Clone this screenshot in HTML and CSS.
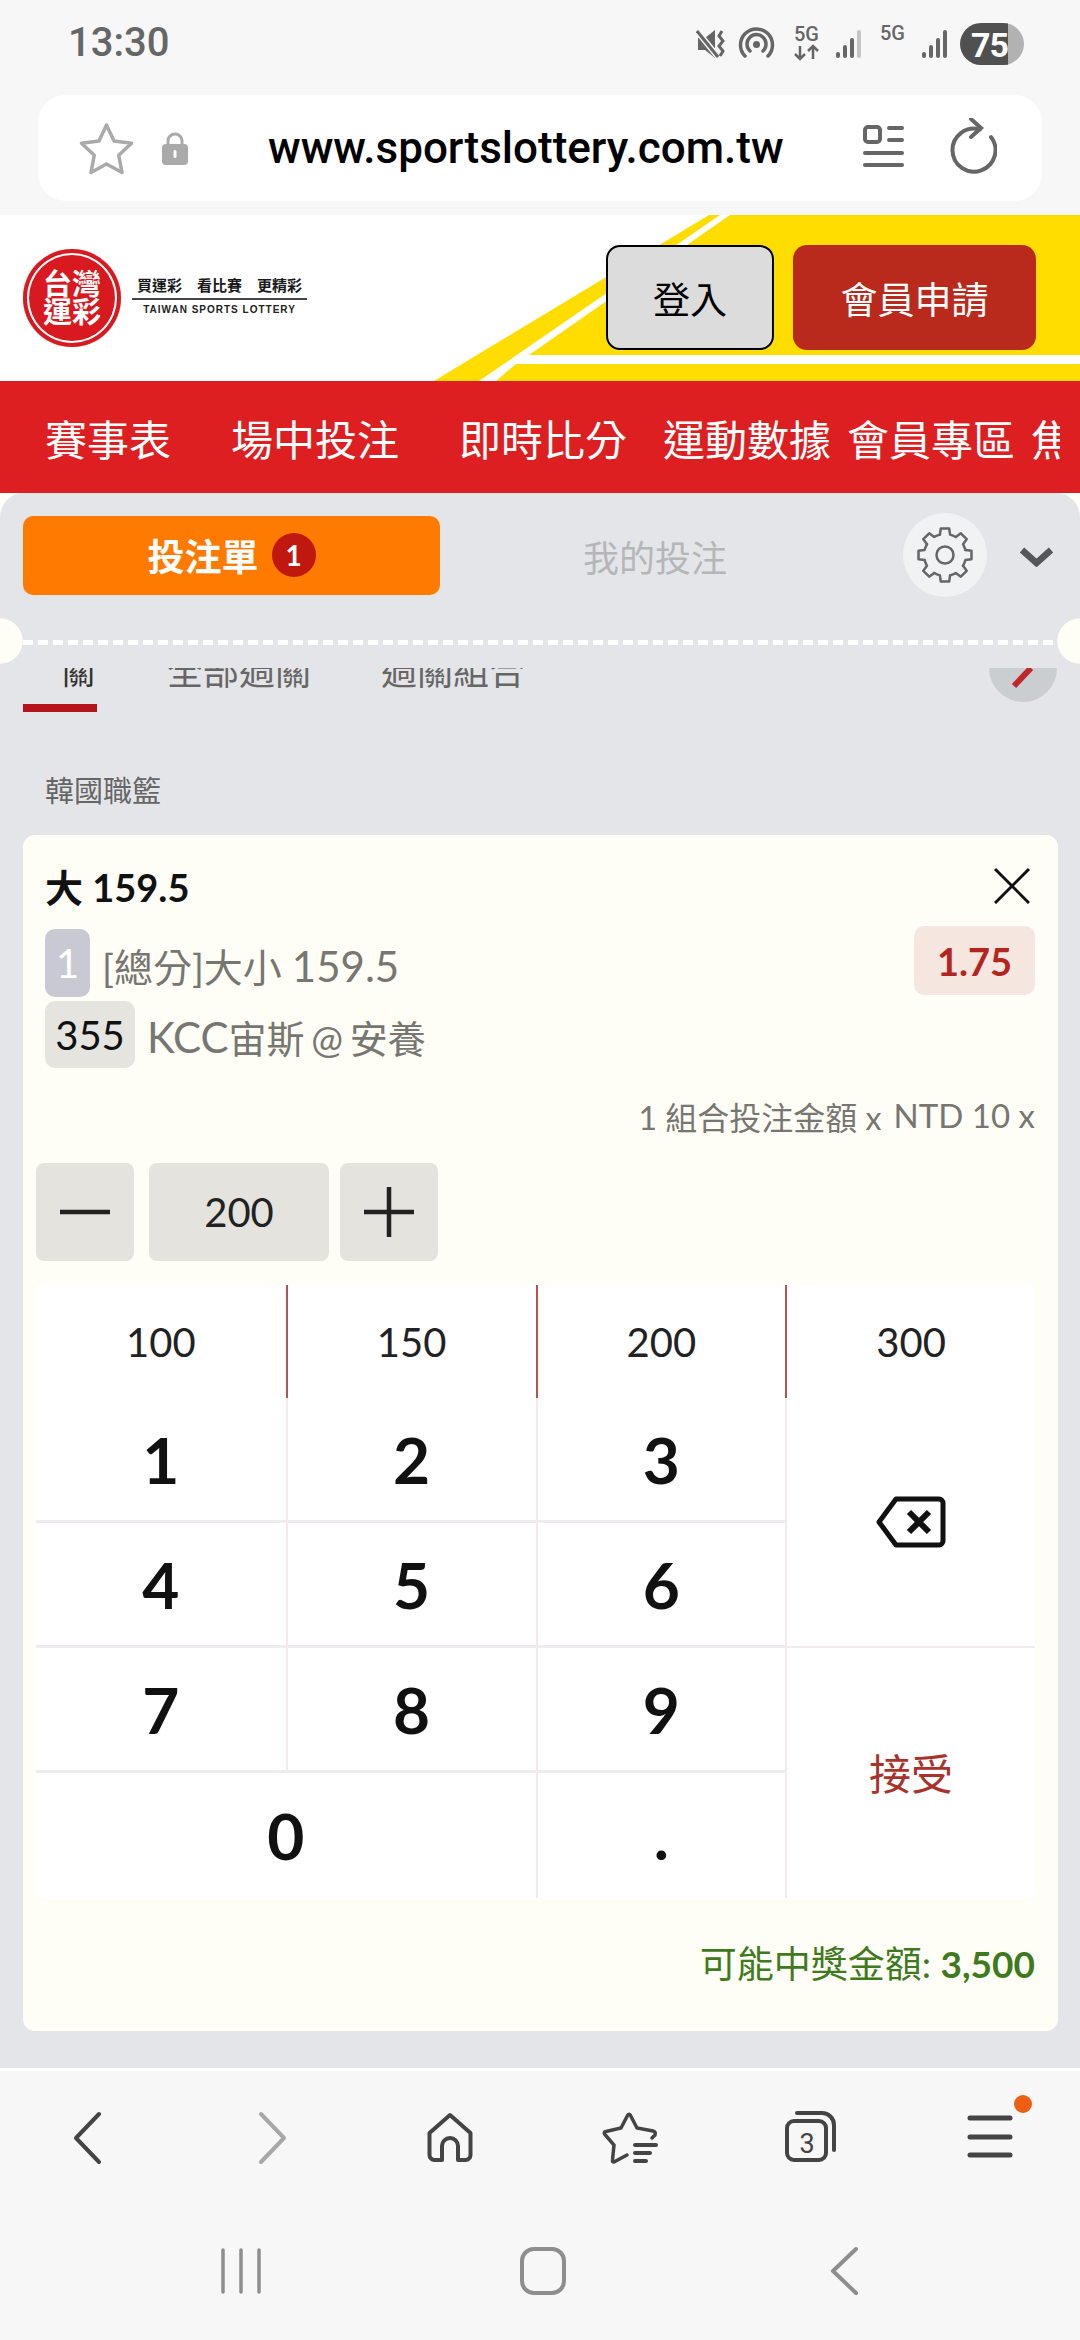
FILE: index.html
```html
<!DOCTYPE html>
<html>
<head>
    <meta charset="utf-8">
    <link rel="stylesheet" href="styles.css">
</head>
<body>
    <div class="chrome-top">
        <div class="status-bar">
            <span class="clock">13:30</span>
            <svg class="status-icons" width="328" height="44" viewBox="0 0 328 44">
                <path d="M2 15h7l10-8v28l-10-8H2z" fill="#666"/>
                <path d="M1 8l21 26" stroke="#f7f7f7" stroke-width="6"/>
                <path d="M1 8l21 26" stroke="#666" stroke-width="3"/>
                <path d="M26 8l-3 5 4 5-4 5 4 5-3 5" fill="none" stroke="#666" stroke-width="3"/>
                <g fill="none" stroke="#666" stroke-width="3.5" stroke-linecap="round">
                    <path d="M49 33a16 16 0 1 1 23 0"/>
                    <path d="M54 28a9.5 9.5 0 1 1 13 0"/>
                </g>
                <circle cx="60.5" cy="21.5" r="3.5" fill="#666"/>
                <text x="98" y="18" class="net-label">5G</text>
                <path d="M104 23v13m-5-5 5 5 5-5M117 36V23m-5 5 5-5 5 5" fill="none" stroke="#666" stroke-width="2.5"/>
                <g fill="#666">
                    <rect x="140" y="29" width="4" height="6" rx="2"/>
                    <rect x="147" y="22" width="4" height="13" rx="2"/>
                    <rect x="154" y="15" width="4" height="20" rx="2"/>
                    <rect x="161" y="7" width="4" height="28" rx="2" fill="#c4c4c4"/>
                    <rect x="226" y="29" width="4" height="6" rx="2"/>
                    <rect x="233" y="22" width="4" height="13" rx="2"/>
                    <rect x="240" y="15" width="4" height="20" rx="2"/>
                    <rect x="247" y="7" width="4" height="28" rx="2"/>
                </g>
                <text x="184" y="17" class="net-label">5G</text>
                <path d="M312 0h-27a21 21 0 0 0 0 42h27z" fill="#505050"/>
                <path d="M312 0h-5a21 21 0 0 1 0 42h5z" fill="#b2b2b2"/>
                <text x="275" y="34" class="batt-label">75</text>
            </svg>
        </div>
        <div class="url-bar">
            <svg class="url-star" width="55" height="53" viewBox="0 0 55 53">
                <path d="M27.5 3l7.5 16 17.5 2.200-12.800 12 3.300 17.300-15.500-8.500-15.500 8.500 3.300-17.300-12.800-12 17.500-2.200z" fill="none" stroke="#aaa" stroke-width="3.5" stroke-linejoin="round"/>
            </svg>
            <svg class="url-lock" width="26" height="34" viewBox="0 0 26 34">
                <path d="M6 15V10a7 7 0 0 1 14 0v5" fill="none" stroke="#aaa" stroke-width="3"/>
                <rect y="13" width="26" height="21" rx="4" fill="#aaa"/>
                <rect x="11.5" y="19" width="3" height="8" rx="1.5" fill="#fff"/>
            </svg>
            <span class="url-text">www.sportslottery.com.tw</span>
            <svg class="url-reader" width="42" height="44" viewBox="0 0 42 44">
                <rect x="2" y="2" width="15" height="15" rx="3" fill="none" stroke="#666" stroke-width="4"/>
                <path d="M26 3h13M26 15h13M2 28h37M2 40h37" stroke="#666" stroke-width="4" stroke-linecap="round"/>
            </svg>
            <svg class="url-reload" width="48" height="60" viewBox="0 0 48 60">
                <path d="M42 19A21.500 21.500 0 1 1 31 11.500" fill="none" stroke="#666" stroke-width="4" stroke-linecap="round"/>
                <path d="M22 1l10 9-10 9" fill="none" stroke="#666" stroke-width="4" stroke-linecap="round"/>
            </svg>
        </div>
    </div>

    <header class="site-header">
        <svg class="header-bg" width="1080" height="166" viewBox="0 0 1080 166">
            <path d="M709 0h11L479 166h-45zM730 0h350v140H529zM496 166l20-17h564v17z" fill="#ffdd00"/>
        </svg>
        <div class="logo">
            <div class="logo-mark">
                <span>台灣運彩</span>
            </div>
            <div class="logo-text">
                <div class="logo-slogan"><span>買運彩</span><span>看比賽</span><span>更精彩</span></div>
                <div class="logo-en">TAIWAN SPORTS LOTTERY</div>
            </div>
        </div>
        <div class="auth">
            <button class="btn-login">登入</button>
            <button class="btn-join">會員申請</button>
        </div>
    </header>

    <nav class="main-nav">
        <div class="nav-scroll">
            <span class="gap-wide">賽事表</span>
            <span class="gap-wide">場中投注</span>
            <span class="gap-mid">即時比分</span>
            <span class="gap-tight">運動數據</span>
            <span class="gap-tight">會員專區</span>
            <span>焦</span>
        </div>
    </nav>

    <main class="panel-wrap">
        <div class="panel">
            <div class="slip-head">
                <button class="slip-tab">投注單 <span class="slip-count">1</span></button>
                <span class="slip-other">我的投注</span>
                <div class="gear">
                    <svg width="56" height="56" viewBox="0 0 56 56">
                        <defs>
                            <path id="tooth" d="M22.900 7.600L23.800 1.500H32.200L33.100 7.600Q36 8.500 38.800 10" fill="none" stroke="#666" stroke-width="2.500" stroke-linejoin="round" stroke-linecap="round"/>
                        </defs>
                        <use href="#tooth"/>
                        <use href="#tooth" transform="rotate(45 28 28)"/>
                        <use href="#tooth" transform="rotate(90 28 28)"/>
                        <use href="#tooth" transform="rotate(135 28 28)"/>
                        <use href="#tooth" transform="rotate(180 28 28)"/>
                        <use href="#tooth" transform="rotate(225 28 28)"/>
                        <use href="#tooth" transform="rotate(270 28 28)"/>
                        <use href="#tooth" transform="rotate(315 28 28)"/>
                        <circle cx="28" cy="28" r="8.5" fill="none" stroke="#666" stroke-width="2.500"/>
                    </svg>
                </div>
                <svg class="chevron" width="35" height="20" viewBox="0 0 35 20">
                    <path d="M3 3l14.500 13L32 3" fill="none" stroke="#55565a" stroke-width="6.500"/>
                </svg>
            </div>

            <div class="tear"></div>

            <div class="tabs-view">
                <div class="tabs">
                    <span class="tab tab-active">關</span>
                    <span class="tab">全部過關</span>
                    <span class="tab">過關組合</span>
                </div>
                <div class="edit-btn">
                    <svg width="68" height="34" viewBox="0 0 68 34">
                        <path d="M42 0L25 18" stroke="#c0272d" stroke-width="6"/>
                    </svg>
                </div>
            </div>

            <div class="league">韓國職籃</div>

            <section class="card">
                <div class="card-title-row">
                    <span class="card-title">大 159.5</span>
                    <svg class="close" width="36" height="36" viewBox="0 0 36 36">
                        <path d="M1 1l34 34M35 1L1 35" stroke="#111" stroke-width="3"/>
                    </svg>
                </div>

                <div class="bet-info">
                    <div class="bet-lines">
                        <div class="bet-line first">
                            <span class="badge badge-seq">1</span>
                            <span class="bet-text">[總分]大小 <span class="latin">159.5</span></span>
                        </div>
                        <div class="bet-line">
                            <span class="badge badge-code">355</span>
                            <span class="bet-text"><span class="latin">KCC</span>宙斯 @ 安養</span>
                        </div>
                    </div>
                    <span class="odds">1.75</span>
                </div>

                <div class="combo">1 組合投注金額 x <span class="combo-unit">NTD 10 x</span></div>

                <div class="stepper">
                    <button class="step">
                        <svg width="52" height="52" viewBox="0 0 52 52"><path d="M1 26h50" stroke="#222" stroke-width="4.500"/></svg>
                    </button>
                    <div class="step-value">200</div>
                    <button class="step">
                        <svg width="52" height="52" viewBox="0 0 52 52"><path d="M1 26h50M26 1v50" stroke="#222" stroke-width="4.500"/></svg>
                    </button>
                </div>

                <div class="keypad">
                    <div class="key quick first-col">100</div>
                    <div class="key quick">150</div>
                    <div class="key quick">200</div>
                    <div class="key quick">300</div>

                    <div class="key num row-line first-col">1</div>
                    <div class="key num row-line">2</div>
                    <div class="key num row-line">3</div>
                    <div class="key backspace">
                        <svg width="70" height="52" viewBox="0 0 70 52">
                            <path d="M20 3h43a4 4 0 0 1 4 4v38a4 4 0 0 1-4 4H20L3 26z" fill="none" stroke="#111" stroke-width="5" stroke-linejoin="round"/>
                            <path d="M33 16l20 20M53 16L33 36" stroke="#111" stroke-width="6"/>
                        </svg>
                    </div>

                    <div class="key num row-line first-col">4</div>
                    <div class="key num row-line">5</div>
                    <div class="key num row-line">6</div>

                    <div class="key num row-line first-col">7</div>
                    <div class="key num row-line">8</div>
                    <div class="key num row-line">9</div>
                    <div class="key accept">接受</div>

                    <div class="key num zero first-col">0</div>
                    <div class="key num">.</div>
                </div>

                <div class="payout">可能中獎金額: <b>3,500</b></div>
            </section>
        </div>
    </main>

    <footer class="chrome-bottom">
        <div class="browser-nav">
            <svg width="60" height="60" viewBox="0 0 60 60"><path d="M39 6L16 30l23 24" fill="none" stroke="#444" stroke-width="4" stroke-linecap="round" stroke-linejoin="round"/></svg>
            <svg width="60" height="60" viewBox="0 0 60 60"><path d="M21 6l23 24-23 24" fill="none" stroke="#a8a8a8" stroke-width="4" stroke-linecap="round" stroke-linejoin="round"/></svg>
            <svg width="60" height="60" viewBox="0 0 60 60"><path d="M30 7L9.500 25v22a5 5 0 0 0 5 5H22V38a8 8 0 0 1 16 0v14h7.500a5 5 0 0 0 5-5V25z" fill="none" stroke="#444" stroke-width="4" stroke-linejoin="round"/></svg>
            <svg width="60" height="60" viewBox="0 0 60 60">
                <path d="M27 47L14 54Q12 54 12.500 52L14 37 4.500 26Q3.500 24 6 23.500L21 20 27.500 7.500Q29 5 30.500 7.500L37 20 53 23Q56 24 55 27L52 30" fill="none" stroke="#444" stroke-width="3.500" stroke-linecap="round"/>
                <path d="M35 37h21M35 45h15M35 53h11" stroke="#444" stroke-width="4" stroke-linecap="round"/>
            </svg>
            <svg width="60" height="60" viewBox="0 0 60 60">
                <rect x="7" y="13" width="39" height="39" rx="7" fill="none" stroke="#444" stroke-width="4"/>
                <path d="M17 5h25a12 12 0 0 1 12 12v25" fill="none" stroke="#444" stroke-width="4" stroke-linecap="round"/>
                <text x="27" y="45" class="tab-count">3</text>
            </svg>
            <div class="menu-icon">
                <svg width="60" height="60" viewBox="0 0 60 60"><path d="M10 10h40M10 29h40M10 47h40" stroke="#444" stroke-width="5" stroke-linecap="round"/></svg>
                <span class="menu-dot"></span>
            </div>
        </div>
        <div class="system-nav">
            <svg width="60" height="60" viewBox="0 0 60 60"><path d="M12 9v42M30 9v42M48 9v42" stroke="#8e8e8e" stroke-width="3.500" stroke-linecap="round"/></svg>
            <svg width="60" height="60" viewBox="0 0 60 60"><rect x="9" y="8" width="42" height="44" rx="12" fill="none" stroke="#8e8e8e" stroke-width="4"/></svg>
            <svg width="60" height="60" viewBox="0 0 60 60"><path d="M41 8L18 30l23 22" fill="none" stroke="#8e8e8e" stroke-width="4" stroke-linecap="round" stroke-linejoin="round"/></svg>
        </div>
    </footer>
</body>
</html>
```

FILE: styles.css
```css
* {
    box-sizing: border-box;
}
body {
    margin: 0;
    width: 1080px;
    height: 2340px;
    overflow: hidden;
    font-family: Lato, "Noto Sans CJK TC", sans-serif;
    background-color: #f7f7f7;
    color: #222;
}
button {
    font-family: inherit;
    border: none;
    padding: 0;
}

/* top browser chrome */
.chrome-top {
    height: 215px;
    background-color: #f7f7f7;
}
.status-bar {
    height: 95px;
    display: flex;
    justify-content: space-between;
    padding: 23px 56px 0 68px;
}
.clock {
    font-family: Roboto, sans-serif;
    font-size: 40px;
    font-weight: 500;
    line-height: 40px;
    color: #666;
}
.status-icons {
    display: block;
}
.net-label {
    font-family: Roboto, sans-serif;
    font-size: 20px;
    font-weight: 500;
    fill: #666;
}
.batt-label {
    font-family: Roboto, sans-serif;
    font-size: 34px;
    font-weight: 700;
    fill: #fff;
    letter-spacing: -1px;
}
.url-bar {
    height: 106px;
    margin: 0 38px;
    background-color: #fff;
    border-radius: 28px;
    display: flex;
    align-items: center;
    padding-left: 41px;
}
.url-star {
    margin-right: 28px;
}
.url-text {
    width: 675px;
    padding-left: 80px;
    font-family: Roboto, sans-serif;
    font-size: 44px;
    font-weight: 500;
    color: #000;
    white-space: nowrap;
}
.url-reader {
    margin-right: 44px;
    margin-top: -2px;
}

/* site header */
.site-header {
    height: 166px;
    position: relative;
    isolation: isolate;
    background-color: #fff;
    display: flex;
    justify-content: space-between;
    align-items: center;
    padding: 0 44px 1px 23px;
}
.header-bg {
    position: absolute;
    top: 0;
    left: 0;
    z-index: -1;
}
.logo {
    display: flex;
    align-items: center;
    gap: 11px;
}
.logo-mark {
    width: 98px;
    height: 98px;
    border-radius: 50%;
    background-color: #d81920;
    box-shadow: inset 0 0 0 4px #d81920, inset 0 0 0 6px #fff;
    color: #fff;
    font-size: 29px;
    font-weight: 700;
    line-height: 28px;
    display: flex;
    align-items: center;
    justify-content: center;
}
.logo-mark span {
    width: 58px;
    text-align: center;
}
.logo-text {
    width: 175px;
}
.logo-slogan {
    display: flex;
    justify-content: center;
    gap: 15px;
    font-size: 15px;
    font-weight: 700;
    line-height: 20px;
    color: #1a1a1a;
    padding-bottom: 3px;
    border-bottom: 2px solid #444;
}
.logo-en {
    font-family: "Liberation Sans", sans-serif;
    font-size: 10px;
    font-weight: 700;
    letter-spacing: 1px;
    line-height: 20px;
    color: #222;
    text-align: center;
    white-space: nowrap;
}
.auth {
    display: flex;
    gap: 19px;
}
.btn-login, .btn-join {
    height: 105px;
    border-radius: 14px;
    font-size: 37px;
}
.btn-login {
    width: 168px;
    background-color: #dcdcdc;
    border: 2px solid #000;
    color: #000;
}
.btn-join {
    width: 243px;
    background-color: #b92a1c;
    color: #fff;
}

/* red nav */
.main-nav {
    height: 112px;
    background-color: #dd1f21;
    color: #fff;
    font-size: 42px;
    display: flex;
    align-items: center;
    padding-left: 45px;
}
.nav-scroll {
    width: 1015px;
    overflow: hidden;
    display: flex;
    white-space: nowrap;
}
.gap-wide {
    margin-right: 60px;
}
.gap-mid {
    margin-right: 36px;
}
.gap-tight {
    margin-right: 16px;
}

/* bet slip panel */
.panel-wrap {
    height: 1575px;
    background-color: #fffef6;
}
.panel {
    height: 100%;
    background-color: #e4e5e8;
    border-radius: 24px 24px 0 0;
}
.slip-head {
    height: 125px;
    padding: 20px 0 21px 23px;
    display: flex;
    align-items: center;
}
.slip-tab {
    width: 417px;
    height: 79px;
    border-radius: 10px;
    background-color: #ff7a00;
    color: #fff;
    font-size: 37px;
    font-weight: 700;
    display: flex;
    align-items: center;
    justify-content: center;
    gap: 13px;
}
.slip-count {
    width: 44px;
    height: 44px;
    border-radius: 50%;
    background-color: #c0180e;
    font-size: 28px;
    line-height: 44px;
}
.slip-other {
    width: 146px;
    margin-left: 143px;
    margin-top: 2px;
    font-size: 36px;
    color: #b5b6b8;
}
.gear {
    width: 84px;
    height: 84px;
    margin-left: 174px;
    border-radius: 50%;
    background-color: #f1f2f4;
    display: flex;
    align-items: center;
    justify-content: center;
}
.chevron {
    margin-left: 32px;
    margin-top: 4px;
}
.tear {
    height: 50px;
    padding: 22px 23px 0;
    background-image:
        radial-gradient(circle 23px at 0 23px, #fffef6 97%, transparent),
        radial-gradient(circle 23px at 100% 23px, #fffef6 97%, transparent);
}
.tear::before {
    content: "";
    display: block;
    height: 5px;
    background-image: repeating-linear-gradient(90deg, #fff 0 10px, transparent 10px 15px);
}
.tabs-view {
    height: 44px;
    position: relative;
    overflow: hidden;
    padding-left: 23px;
}
.tabs {
    display: flex;
    gap: 70px;
    margin-top: -15px;
    line-height: 36px;
    font-size: 36px;
    color: #666;
}
.tab-active {
    width: 74px;
    font-size: 33px;
    color: #333;
    text-align: right;
    padding-right: 2px;
}
.tabs-view::after {
    content: "";
    position: absolute;
    left: 23px;
    bottom: 0;
    width: 74px;
    height: 8px;
    background-color: #b5141b;
}
.edit-btn {
    position: absolute;
    top: 0;
    right: 23px;
    width: 68px;
    height: 34px;
    border-radius: 0 0 34px 34px;
    background-color: #cbced1;
}
.edit-btn svg {
    display: block;
}
.league {
    margin: 59px 0 24px 45px;
    font-size: 29px;
    line-height: 40px;
    color: #666;
}

/* bet card */
.card {
    margin: 0 22px 0 23px;
    padding: 30px 23px 47px 13px;
    background-color: #fffef6;
    border-radius: 12px;
}
.card-title-row {
    height: 44px;
    padding-left: 9px;
    display: flex;
    justify-content: space-between;
    align-items: center;
}
.card-title {
    font-size: 38px;
    font-weight: 700;
    color: #111;
    margin-top: -3px;
}
.close {
    margin-right: 5px;
    margin-top: -3px;
}
.bet-info {
    margin-top: 17px;
    padding-left: 9px;
    display: flex;
    justify-content: space-between;
    align-items: flex-start;
}
.bet-line {
    display: flex;
    align-items: center;
    gap: 12px;
    height: 67px;
    margin-top: 4px;
}
.bet-line.first {
    height: 68px;
    margin-top: 3px;
}
.badge {
    height: 100%;
    border-radius: 10px;
    font-size: 40px;
    display: flex;
    align-items: center;
    justify-content: center;
}
.badge-seq {
    width: 45px;
    background-color: #c8c9d2;
    color: #fff;
}
.badge-code {
    width: 90px;
    background-color: #e5e4df;
    color: #111;
}
.bet-text {
    padding-top: 3px;
    font-size: 38px;
    word-spacing: -3px;
    color: #777670;
    white-space: nowrap;
}
.first .bet-text {
    font-size: 39px;
    word-spacing: 0;
}
.latin {
    font-size: 42px;
}
.odds {
    width: 121px;
    height: 69px;
    border-radius: 10px;
    background-color: #f6e6e0;
    color: #b2261f;
    font-size: 38px;
    font-weight: 700;
    display: flex;
    align-items: center;
    justify-content: center;
}
.combo {
    margin-top: 29px;
    font-size: 32px;
    line-height: 40px;
    color: #777670;
    text-align: right;
}
.combo-unit {
    margin-left: 4px;
    font-size: 33px;
    position: relative;
    top: -2px;
}
.stepper {
    margin-top: 25px;
    display: flex;
}
.step, .step-value {
    height: 98px;
    background-color: #e5e3de;
    border-radius: 8px;
    display: flex;
    align-items: center;
    justify-content: center;
}
.step {
    width: 98px;
}
.step-value {
    width: 180px;
    margin: 0 11px 0 15px;
    font-size: 40px;
    color: #222;
}

/* keypad */
.keypad {
    margin-top: 24px;
    display: grid;
    grid-template-columns: repeat(4, 1fr);
    grid-template-rows: 113px repeat(4, 125px);
    background-color: #fff;
    border-radius: 6px;
}
.key {
    display: flex;
    align-items: center;
    justify-content: center;
    border-left: 2px solid #f5e8ea;
}
.quick {
    font-size: 40px;
    color: #222;
    border-left-color: #b0554f;
}
.key.first-col {
    border-left: none;
}
.num {
    font-size: 64px;
    font-weight: 700;
    color: #111;
}
.row-line {
    border-bottom: 3px solid #f0ebee;
}
.backspace {
    grid-column: 4;
    grid-row: 2 / 4;
    border-bottom: 2px solid #f0ebee;
}
.accept {
    grid-column: 4;
    grid-row: 4 / 6;
    padding-bottom: 4px;
    font-size: 42px;
    color: #a9332a;
}
.zero {
    grid-column: 1 / 3;
}
.payout {
    margin-top: 46px;
    font-size: 37px;
    line-height: 40px;
    color: #3f7a1e;
    text-align: right;
}

/* bottom browser chrome */
.chrome-bottom {
    border-top: 3px solid #fff;
    background-color: #f7f7f7;
}
.browser-nav {
    height: 134px;
    display: grid;
    grid-template-columns: repeat(6, 1fr);
    justify-items: center;
    align-items: center;
}
.browser-nav svg, .system-nav svg {
    display: block;
}
.tab-count {
    font-family: Roboto, sans-serif;
    font-size: 27px;
    fill: #444;
    text-anchor: middle;
}
.menu-icon {
    position: relative;
}
.menu-dot {
    position: absolute;
    top: -13px;
    right: -12px;
    width: 18px;
    height: 18px;
    border-radius: 50%;
    background-color: #ee5f14;
}
.system-nav {
    height: 132px;
    padding-left: 5px;
    display: grid;
    grid-template-columns: repeat(3, 302px);
    justify-content: center;
    justify-items: center;
    align-items: center;
}
```
